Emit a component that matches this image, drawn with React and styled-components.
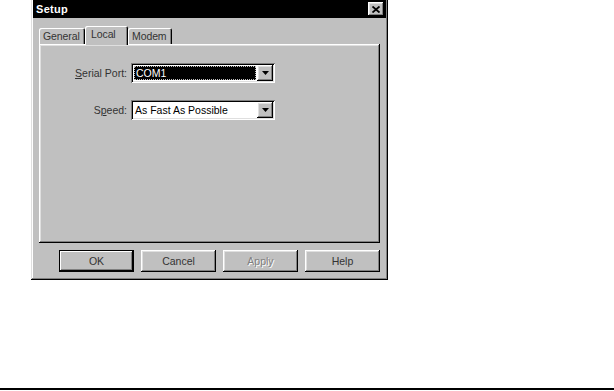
import React from 'react'
import styled, { createGlobalStyle, css } from 'styled-components'

const GlobalStyle = createGlobalStyle`
  html, body {
    margin: 0;
    padding: 0;
    background: #fff;
  }
  body {
    font-family: "Liberation Sans", Arial, sans-serif;
    font-size: 10.5px;
    color: #000;
  }
`

const raised = css`
  box-shadow:
    inset -1px -1px #000,
    inset 1px 1px #fff,
    inset -2px -2px #808080,
    inset 2px 2px #dfdfdf;
`

const sunken = css`
  box-shadow:
    inset 1px 1px #808080,
    inset -1px -1px #fff,
    inset 2px 2px #000,
    inset -2px -2px #dfdfdf;
`

const Page = styled.div`
  width: 614px;
  height: 391px;
  display: flex;
  flex-direction: column;
  overflow: hidden;
`

const Dialog = styled.div`
  margin-left: 31px;
  width: 357px;
  height: 280px;
  box-sizing: border-box;
  background: #c0c0c0;
  padding: 0 2px 2px 2px;
  display: flex;
  flex-direction: column;
  box-shadow:
    inset -1px -1px #000,
    inset 1px 0 #dfdfdf,
    inset -2px -2px #808080,
    inset 2px 0 #fff;
`

const TitleBar = styled.div`
  height: 18px;
  background: #000;
  display: flex;
  align-items: center;
  justify-content: space-between;
  padding: 0 2px 0 3px;
`

const Title = styled.span`
  color: #fff;
  font-weight: bold;
  font-size: 11px;
  letter-spacing: 0.3px;
`

const CloseButton = styled.div`
  width: 16px;
  height: 14px;
  background: #c0c0c0;
  display: flex;
  align-items: center;
  justify-content: center;
  ${raised}
`

const Body = styled.div`
  flex: 1;
  display: flex;
  flex-direction: column;
  padding: 8px 6px 6px 6px;
`

const TabRow = styled.div`
  height: 18px;
  display: flex;
  align-items: flex-end;
  position: relative;
  z-index: 1;
`

const Tab = styled.div`
  box-sizing: border-box;
  width: ${p => p.$w}px;
  height: ${p => (p.$active ? 19 : 16)}px;
  margin-bottom: ${p => (p.$active ? -1 : 0)}px;
  background: #c0c0c0;
  border-top-left-radius: 2px;
  border-top-right-radius: 2px;
  padding-left: ${p => p.$pad}px;
  padding-top: 2px;
  white-space: nowrap;
  letter-spacing: -0.1px;
  color: #333;
  box-shadow:
    inset 1px 1px #fff,
    inset -1px 0 #000,
    inset -2px 0 #808080;
`

const Panel = styled.div`
  height: 199px;
  box-sizing: border-box;
  background: #c0c0c0;
  padding: 19px 0 0 0;
  box-shadow:
    inset -1px -1px #000,
    inset 1px 1px #fff,
    inset -2px -2px #808080,
    inset 2px 2px #dfdfdf;
`

const Form = styled.div`
  display: grid;
  grid-template-columns: 88px 144px;
  column-gap: 4px;
  row-gap: 17px;
  align-items: center;
`

const Label = styled.span`
  text-align: right;
  color: #333;
`

const Key = styled.span`
  text-decoration: underline;
`

const Combo = styled.div`
  height: 20px;
  box-sizing: border-box;
  background: #fff;
  padding: 2px;
  display: flex;
  ${sunken}
`

const Field = styled.div`
  flex: 1;
  display: flex;
  align-items: center;
  padding-left: 2px;
  box-sizing: border-box;
  ${p => p.$focused && css`
    background: #000;
    color: #fff;
    border: 1px dotted #bbb;
    padding-left: 1px;
    margin: 1px;
  `}
`

const DropButton = styled.div`
  width: 16px;
  background: #c0c0c0;
  display: flex;
  align-items: center;
  justify-content: center;
  ${raised}
`

const ButtonRow = styled.div`
  margin-top: 7px;
  display: flex;
  justify-content: flex-end;
  gap: 7px;
`

const Button = styled.div`
  width: 75px;
  height: 22px;
  box-sizing: border-box;
  background: #c0c0c0;
  display: flex;
  align-items: center;
  justify-content: center;
  ${raised}
  ${p => p.$default && css`
    box-shadow:
      inset -1px -1px #000,
      inset 1px 1px #000,
      inset -2px -2px #000,
      inset 2px 2px #fff,
      inset -3px -3px #808080;
  `}
  color: ${p => (p.$disabled ? '#808080' : '#333')};
  text-shadow: ${p => (p.$disabled ? '1px 1px #fff' : 'none')};
`

const Rule = styled.div`
  margin-top: auto;
  margin-bottom: 1px;
  height: 2px;
  background: #000;
`

const Arrow = () => (
  <svg width="7" height="4" viewBox="0 0 7 4">
    <path d="M0 0h7L3.5 4z" fill="#000" />
  </svg>
)

const CloseIcon = () => (
  <svg width="8" height="7" viewBox="0 0 8 7">
    <path d="M0.5 0.5L7.5 6.5M7.5 0.5L0.5 6.5" stroke="#000" strokeWidth="1.8" />
  </svg>
)

const App = () => {
  return (
    <Page>
      <GlobalStyle />
      <Dialog>
        <TitleBar>
          <Title>Setup</Title>
          <CloseButton>
            <CloseIcon />
          </CloseButton>
        </TitleBar>

        <Body>
          <TabRow>
            <Tab $w={46} $pad={4}>General</Tab>
            <Tab $w={43} $pad={6} $active>Local</Tab>
            <Tab $w={44} $pad={4}>Modem</Tab>
          </TabRow>

          <Panel>
            <Form>
              <Label><Key>S</Key>erial Port:</Label>
              <Combo>
                <Field $focused>COM1</Field>
                <DropButton><Arrow /></DropButton>
              </Combo>

              <Label>S<Key>p</Key>eed:</Label>
              <Combo>
                <Field>As Fast As Possible</Field>
                <DropButton><Arrow /></DropButton>
              </Combo>
            </Form>
          </Panel>

          <ButtonRow>
            <Button $default>OK</Button>
            <Button>Cancel</Button>
            <Button $disabled>Apply</Button>
            <Button>Help</Button>
          </ButtonRow>
        </Body>
      </Dialog>
      <Rule />
    </Page>
  )
}

export default App
